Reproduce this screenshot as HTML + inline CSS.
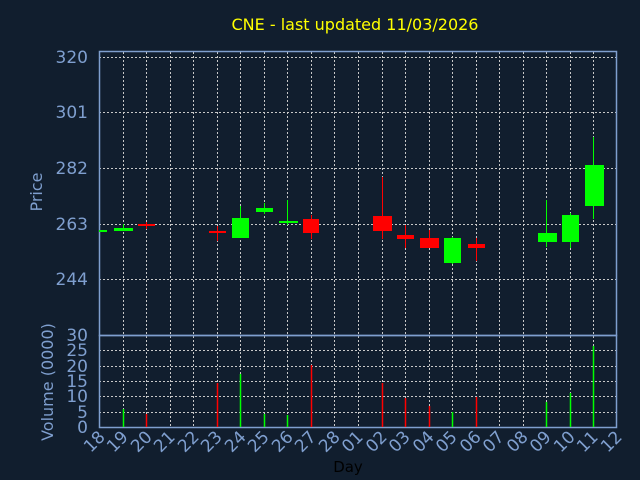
<!DOCTYPE html><html><head><style>body{margin:0;background:#111e2e}svg{display:block}</style></head><body>
<svg width="640" height="480" xmlns="http://www.w3.org/2000/svg" font-family="DejaVu Sans, Liberation Sans, sans-serif">
<rect width="640" height="480" fill="#111e2e"/>
<text x="355" y="30" fill="#ffff00" font-size="16" text-anchor="middle">CNE - last updated 11/03/2026</text>
<g stroke="#c8c8c8" stroke-dasharray="2,2" stroke-width="1">
<line x1="99" y1="57.5" x2="617" y2="57.5"/><line x1="99" y1="112.5" x2="617" y2="112.5"/><line x1="99" y1="168.5" x2="617" y2="168.5"/><line x1="99" y1="224.5" x2="617" y2="224.5"/><line x1="99" y1="279.5" x2="617" y2="279.5"/>
<line x1="99" y1="350.5" x2="617" y2="350.5"/><line x1="99" y1="366.5" x2="617" y2="366.5"/><line x1="99" y1="381.5" x2="617" y2="381.5"/><line x1="99" y1="396.5" x2="617" y2="396.5"/><line x1="99" y1="412.5" x2="617" y2="412.5"/>
<line x1="123.5" y1="52" x2="123.5" y2="427"/><line x1="146.5" y1="52" x2="146.5" y2="427"/><line x1="170.5" y1="52" x2="170.5" y2="427"/><line x1="193.5" y1="52" x2="193.5" y2="427"/><line x1="217.5" y1="52" x2="217.5" y2="427"/><line x1="240.5" y1="52" x2="240.5" y2="427"/><line x1="264.5" y1="52" x2="264.5" y2="427"/><line x1="287.5" y1="52" x2="287.5" y2="427"/><line x1="311.5" y1="52" x2="311.5" y2="427"/><line x1="334.5" y1="52" x2="334.5" y2="427"/><line x1="358.5" y1="52" x2="358.5" y2="427"/><line x1="382.5" y1="52" x2="382.5" y2="427"/><line x1="405.5" y1="52" x2="405.5" y2="427"/><line x1="429.5" y1="52" x2="429.5" y2="427"/><line x1="452.5" y1="52" x2="452.5" y2="427"/><line x1="476.5" y1="52" x2="476.5" y2="427"/><line x1="499.5" y1="52" x2="499.5" y2="427"/><line x1="523.5" y1="52" x2="523.5" y2="427"/><line x1="546.5" y1="52" x2="546.5" y2="427"/><line x1="570.5" y1="52" x2="570.5" y2="427"/><line x1="593.5" y1="52" x2="593.5" y2="427"/>
</g>
<g fill="none" stroke="#7f9fcf" stroke-width="1.5">
<rect x="99.5" y="51.5" width="517" height="284"/>
<rect x="99.5" y="335.5" width="517" height="92"/>
</g>
<g fill="#ff0000" stroke="#ff0000">
<line x1="146.5" y1="222" x2="146.5" y2="229"/><rect x="138" y="224" width="17" height="2" stroke="none"/>
<line x1="217.5" y1="226" x2="217.5" y2="241"/><rect x="209" y="231" width="17" height="2" stroke="none"/>
<line x1="311.5" y1="215" x2="311.5" y2="239"/><rect x="303" y="219" width="16" height="14" stroke="none"/>
<line x1="382.5" y1="177" x2="382.5" y2="239"/><rect x="373" y="216" width="19" height="15" stroke="none"/>
<line x1="405.5" y1="225" x2="405.5" y2="248"/><rect x="397" y="235" width="17" height="4" stroke="none"/>
<line x1="429.5" y1="230" x2="429.5" y2="248"/><rect x="420" y="238" width="19" height="10" stroke="none"/>
<line x1="476.5" y1="238" x2="476.5" y2="261"/><rect x="468" y="244" width="17" height="4" stroke="none"/>
</g>
<g fill="#00ff00" stroke="#00ff00">
<rect x="99" y="230" width="8" height="2" stroke="none"/>
<line x1="123.5" y1="224" x2="123.5" y2="230"/><rect x="114" y="228" width="19" height="3" stroke="none"/>
<line x1="240.5" y1="206" x2="240.5" y2="238"/><rect x="232" y="218" width="17" height="20" stroke="none"/>
<line x1="264.5" y1="203" x2="264.5" y2="214"/><rect x="256" y="208" width="17" height="4" stroke="none"/>
<line x1="287.5" y1="200" x2="287.5" y2="225"/><rect x="279" y="221" width="19" height="2" stroke="none"/>
<line x1="452.5" y1="237" x2="452.5" y2="264"/><rect x="444" y="238" width="17" height="25" stroke="none"/>
<line x1="546.5" y1="200" x2="546.5" y2="247"/><rect x="538" y="233" width="19" height="9" stroke="none"/>
<line x1="570.5" y1="213" x2="570.5" y2="248"/><rect x="562" y="215" width="17" height="27" stroke="none"/>
<line x1="593.5" y1="137" x2="593.5" y2="219"/><rect x="585" y="165" width="19" height="41" stroke="none"/>
</g>
<g stroke-width="1.5">
<line x1="123.5" y1="409" x2="123.5" y2="427" stroke="#00ff00"/>
<line x1="146.5" y1="414" x2="146.5" y2="427" stroke="#ff0000"/>
<line x1="217.5" y1="383" x2="217.5" y2="427" stroke="#ff0000"/>
<line x1="240.5" y1="374" x2="240.5" y2="427" stroke="#00ff00"/>
<line x1="264.5" y1="414" x2="264.5" y2="427" stroke="#00ff00"/>
<line x1="287.5" y1="415" x2="287.5" y2="427" stroke="#00ff00"/>
<line x1="311.5" y1="365" x2="311.5" y2="427" stroke="#ff0000"/>
<line x1="382.5" y1="383" x2="382.5" y2="427" stroke="#ff0000"/>
<line x1="405.5" y1="398" x2="405.5" y2="427" stroke="#ff0000"/>
<line x1="429.5" y1="406" x2="429.5" y2="427" stroke="#ff0000"/>
<line x1="452.5" y1="412" x2="452.5" y2="427" stroke="#00ff00"/>
<line x1="476.5" y1="397" x2="476.5" y2="427" stroke="#ff0000"/>
<line x1="546.5" y1="402" x2="546.5" y2="427" stroke="#00ff00"/>
<line x1="570.5" y1="393" x2="570.5" y2="427" stroke="#00ff00"/>
<line x1="593.5" y1="346" x2="593.5" y2="427" stroke="#00ff00"/>
</g>
<g fill="#7f9fcf" font-size="17" text-anchor="end">
<text x="88" y="63">320</text><text x="88" y="118">301</text><text x="88" y="174">282</text><text x="88" y="230">263</text><text x="88" y="285">244</text>
<text x="88" y="341">30</text><text x="88" y="356">25</text><text x="88" y="372">20</text><text x="88" y="387">15</text><text x="88" y="402">10</text><text x="88" y="418">5</text><text x="88" y="433">0</text>
</g>
<text transform="translate(42,192) rotate(-90)" fill="#7f9fcf" font-size="16" text-anchor="middle">Price</text>
<text transform="translate(53,382) rotate(-90)" fill="#7f9fcf" font-size="16" text-anchor="middle">Volume (0000)</text>
<g fill="#7f9fcf" font-size="17" text-anchor="end">
<text transform="translate(106,438) rotate(-45)">18</text><text transform="translate(129,438) rotate(-45)">19</text><text transform="translate(153,438) rotate(-45)">20</text><text transform="translate(176,438) rotate(-45)">21</text><text transform="translate(200,438) rotate(-45)">22</text><text transform="translate(223,438) rotate(-45)">23</text><text transform="translate(247,438) rotate(-45)">24</text><text transform="translate(270,438) rotate(-45)">25</text><text transform="translate(294,438) rotate(-45)">26</text><text transform="translate(317,438) rotate(-45)">27</text><text transform="translate(341,438) rotate(-45)">28</text><text transform="translate(364,438) rotate(-45)">01</text><text transform="translate(388,438) rotate(-45)">02</text><text transform="translate(411,438) rotate(-45)">03</text><text transform="translate(435,438) rotate(-45)">04</text><text transform="translate(458,438) rotate(-45)">05</text><text transform="translate(482,438) rotate(-45)">06</text><text transform="translate(505,438) rotate(-45)">07</text><text transform="translate(529,438) rotate(-45)">08</text><text transform="translate(552,438) rotate(-45)">09</text><text transform="translate(576,438) rotate(-45)">10</text><text transform="translate(599,438) rotate(-45)">11</text><text transform="translate(623,438) rotate(-45)">12</text>
</g>
<text x="348" y="472" fill="#000" font-size="15" text-anchor="middle">Day</text>
</svg></body></html>
